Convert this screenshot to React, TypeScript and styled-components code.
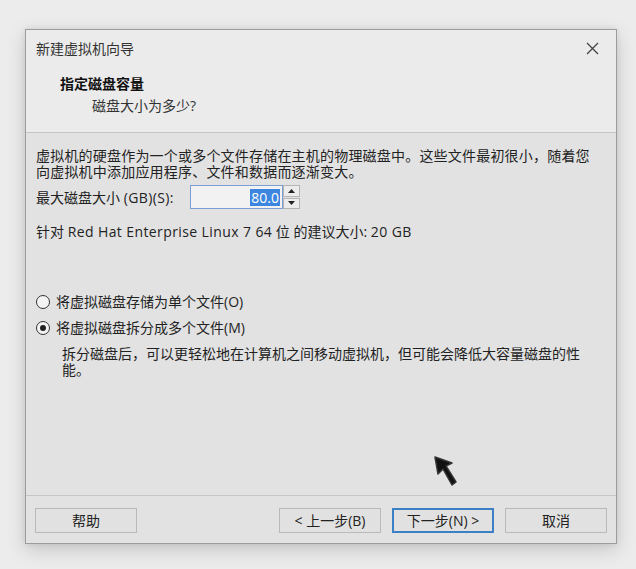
import React from "react";
import styled, { createGlobalStyle } from "styled-components";

const GlobalStyle = createGlobalStyle`
  html, body {
    margin: 0;
    padding: 0;
    background: #ececec;
  }
  body {
    font-family: "Open Sans", "Noto Sans CJK SC", sans-serif;
    font-size: 14px;
    color: #222;
  }
`;

const Stage = styled.div`
  width: 636px;
  height: 569px;
  position: relative;
  padding: 29px 0 0 25px;
  box-sizing: border-box;
  overflow: hidden;
`;

const Dialog = styled.div`
  width: 592px;
  height: 515px;
  box-sizing: border-box;
  border: 1px solid #9c9c9c;
  background: #e2e2e2;
  display: flex;
  flex-direction: column;
  box-shadow: 0 6px 18px rgba(0, 0, 0, 0.16), 0 0 6px rgba(0, 0, 0, 0.08);
`;

const Header = styled.div`
  height: 103px;
  flex: none;
  background: #ebebeb;
  border-bottom: 1px solid #c6c6c6;
  padding: 9px 10px 0 10px;
  box-sizing: border-box;
  display: flex;
  flex-direction: column;
`;

const TitleRow = styled.div`
  display: flex;
  justify-content: space-between;
  align-items: center;
  height: 18px;
  font-size: 14px;
  color: #333;
`;

const CloseBtn = styled.div`
  width: 16px;
  height: 16px;
  display: flex;
  align-items: center;
  justify-content: center;
  margin-right: 6px;
`;

const Heading = styled.div`
  margin: 18px 0 0 24px;
  font-weight: 700;
  font-size: 14px;
  line-height: 18px;
  color: #111;
`;

const SubHeading = styled.div`
  margin: 4px 0 0 56px;
  font-size: 14px;
  line-height: 18px;
  color: #333;
`;

const Body = styled.div`
  flex: 1;
  padding: 15px 11px 0 10px;
  display: flex;
  flex-direction: column;
  border-bottom: 1px solid #c6c6c6;
`;

const Para = styled.div`
  line-height: 16px;
  font-size: 14px;
  letter-spacing: 0.2px;
`;

const Lat = styled.span`
  letter-spacing: 0.4px;
`;

const SizeRow = styled.div`
  display: flex;
  align-items: center;
  margin-top: 5px;
  gap: 16px;
`;

const SpinBox = styled.div`
  display: flex;
  height: 24px;
`;

const Field = styled.div`
  width: 93px;
  box-sizing: border-box;
  border: 1px solid #7a9fd4;
  background: #f2f2f2;
  display: flex;
  align-items: center;
  justify-content: flex-end;
  padding-right: 2px;
`;

const Selected = styled.span`
  background: #3c86e0;
  color: #fff;
  line-height: 17px;
  padding: 0 1px;
`;

const Spinner = styled.div`
  width: 17px;
  display: flex;
  flex-direction: column;
  gap: 1px;
`;

const SpinHalf = styled.div`
  flex: 1;
  border: 1px solid #b4b4b4;
  background: #ececec;
  display: flex;
  align-items: center;
  justify-content: center;
`;

const Recommend = styled.div`
  margin-top: 14px;
  line-height: 18px;
`;

const Options = styled.div`
  margin-top: 52px;
  display: flex;
  flex-direction: column;
  gap: 8px;
`;

const Radio = styled.label`
  display: flex;
  align-items: center;
  gap: 6px;
  line-height: 18px;
`;

const Circle = styled.span<{ $checked?: boolean }>`
  width: 14px;
  height: 14px;
  border-radius: 50%;
  border: 1px solid #333;
  background: #f4f4f4;
  box-sizing: border-box;
  display: flex;
  align-items: center;
  justify-content: center;
  &::after {
    content: "";
    width: 6px;
    height: 6px;
    border-radius: 50%;
    background: ${(p) => (p.$checked ? "#222" : "transparent")};
  }
`;

const Hint = styled.div`
  margin: 9px 0 0 26px;
  line-height: 16px;
`;

const Footer = styled.div`
  height: 47px;
  flex: none;
  display: flex;
  align-items: center;
  padding: 0 9px 0 9px;
  box-sizing: border-box;
`;

const Spacer = styled.div`
  flex: 1;
`;

const Button = styled.button<{ $primary?: boolean }>`
  width: 102px;
  height: 25px;
  margin-top: 1px;
  box-sizing: border-box;
  border: 1px solid ${(p) => (p.$primary ? "#3b7fc4" : "#b9b9b9")};
  box-shadow: ${(p) => (p.$primary ? "inset 0 0 0 1px #3b7fc4" : "none")};
  background: #e1e1e1;
  font-family: "Open Sans", "Noto Sans CJK SC", sans-serif;
  font-size: 14px;
  color: #222;
  padding: 0;
  & + & {
    margin-left: 11px;
  }
`;

const Cursor = styled.svg`
  position: absolute;
  left: 432px;
  top: 454px;
`;

export default function App() {
  return (
    <>
      <GlobalStyle />
      <Stage>
        <Dialog>
          <Header>
            <TitleRow>
              <span>新建虚拟机向导</span>
              <CloseBtn>
                <svg width="13" height="13" viewBox="0 0 13 13">
                  <path d="M1 1 L12 12 M12 1 L1 12" stroke="#444" strokeWidth="1.3" />
                </svg>
              </CloseBtn>
            </TitleRow>
            <Heading>指定磁盘容量</Heading>
            <SubHeading>磁盘大小为多少?</SubHeading>
          </Header>
          <Body>
            <Para>
              虚拟机的硬盘作为一个或多个文件存储在主机的物理磁盘中。这些文件最初很小，随着您
              <br />
              向虚拟机中添加应用程序、文件和数据而逐渐变大。
            </Para>
            <SizeRow>
              <span>
                最大磁盘大小 <Lat>(GB)(S):</Lat>
              </span>
              <SpinBox>
                <Field>
                  <Selected>80.0</Selected>
                </Field>
                <Spinner>
                  <SpinHalf>
                    <svg width="7" height="4" viewBox="0 0 7 4">
                      <path d="M0 4 L3.5 0 L7 4 Z" fill="#222" />
                    </svg>
                  </SpinHalf>
                  <SpinHalf>
                    <svg width="7" height="4" viewBox="0 0 7 4">
                      <path d="M0 0 L3.5 4 L7 0 Z" fill="#222" />
                    </svg>
                  </SpinHalf>
                </Spinner>
              </SpinBox>
            </SizeRow>
            <Recommend>
              针对 <Lat>Red Hat Enterprise Linux 7 64</Lat> 位 的建议大小: <Lat>20 GB</Lat>
            </Recommend>
            <Options>
              <Radio>
                <Circle />
                <span>将虚拟磁盘存储为单个文件(O)</span>
              </Radio>
              <Radio>
                <Circle $checked />
                <span>将虚拟磁盘拆分成多个文件(M)</span>
              </Radio>
            </Options>
            <Hint>
              拆分磁盘后，可以更轻松地在计算机之间移动虚拟机，但可能会降低大容量磁盘的性
              <br />
              能。
            </Hint>
          </Body>
          <Footer>
            <Button>帮助</Button>
            <Spacer />
            <Button>&lt; 上一步(B)</Button>
            <Button $primary>下一步(N) &gt;</Button>
            <Button>取消</Button>
          </Footer>
        </Dialog>
        <Cursor width="30" height="36" viewBox="0 0 30 36">
          <path
            d="M3 3 L20 9 L14 12 L24 28 L20 31 L11 15 L6 20 Z"
            fill="#111"
            stroke="#333"
            strokeWidth="1.5"
            strokeLinejoin="round"
          />
        </Cursor>
      </Stage>
    </>
  );
}
